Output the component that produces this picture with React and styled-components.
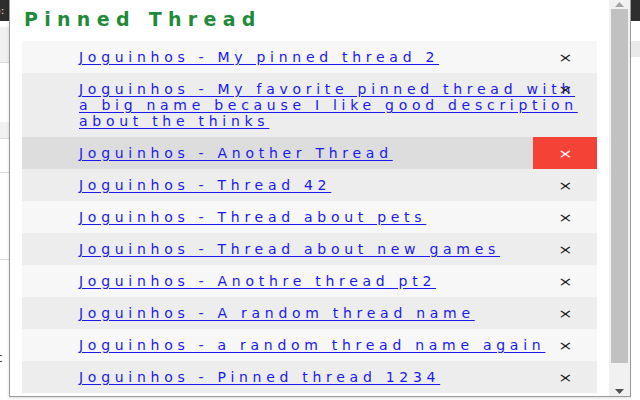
import React from 'react';
import styled, { createGlobalStyle } from 'styled-components';

const Global = createGlobalStyle`
  html, body { margin: 0; padding: 0; background: #fff; overflow: hidden; }
  body { width: 640px; height: 400px; font-family: "DejaVu Sans", Verdana, sans-serif; }
`;

const Screen = styled.div`
  display: flex;
  width: 640px;
  height: 400px;
  overflow: hidden;
`;

/* page behind the popup, only a sliver is visible on each side */
const Backdrop = styled.div`
  width: 9px;
  flex-shrink: 0;
  display: flex;
  flex-direction: column;
  background: #fff;
`;

const BackBar = styled.div`
  height: 21px;
  background: #2e2e2e;
  color: #ddd;
  font: 11px "DejaVu Sans", sans-serif;
  line-height: 21px;
  white-space: nowrap;
  overflow: hidden;
  text-indent: ${({ $indent }) => $indent || 0}px;
`;

const BackBand = styled.div`
  height: ${({ $h }) => $h}px;
  background: ${({ $bg }) => $bg || '#fff'};
  border-bottom: ${({ $line }) => ($line ? '1px solid #dcdcdc' : 'none')};
`;

const BackText = styled.div`
  height: 20px;
  font: 12px "DejaVu Sans", sans-serif;
  color: #333;
  line-height: 20px;
  text-indent: -4px;
  overflow: hidden;
`;

const Popup = styled.div`
  width: 620px;
  height: 396px;
  flex-shrink: 0;
  display: flex;
  background: #fff;
  border-left: 1px solid #9a9a9a;
  border-right: 1px solid #9a9a9a;
  border-bottom: 1px solid #9a9a9a;
  box-shadow: 0 1px 3px rgba(0, 0, 0, 0.15);
`;

const Content = styled.div`
  flex: 1;
  padding: 7px 12px 0 12px;
  overflow: hidden;
`;

const Title = styled.h1`
  margin: 0 0 10px 2px;
  font-family: "DejaVu Sans", Verdana, sans-serif;
  font-size: 19px;
  line-height: 24px;
  font-weight: 700;
  letter-spacing: 6.3px;
  color: #1f8b3a;
`;

const List = styled.ul`
  list-style: none;
  margin: 0;
  padding: 0;
`;

const Row = styled.li`
  position: relative;
  padding: 8px 8px 8px 57px;
  font-size: 14px;
  line-height: 16px;
  background: ${({ $hover, $odd }) => ($hover ? '#dddddd' : $odd ? '#f7f7f7' : '#ededed')};
`;

const Link = styled.a`
  font-family: "DejaVu Sans", Verdana, sans-serif;
  font-size: 14px;
  line-height: 16px;
  letter-spacing: 4.72px;
  color: #1a1aee;
  text-decoration: underline;
  text-underline-offset: 2px;
`;

const Remove = styled.span`
  position: absolute;
  top: 0;
  right: 0;
  width: 64px;
  height: 32px;
  display: flex;
  align-items: center;
  justify-content: center;
  background: ${({ $hover }) => ($hover ? '#f44336' : 'transparent')};
  color: ${({ $hover }) => ($hover ? '#fff' : '#222')};
`;

const Cross = styled.span`
  display: inline-block;
  font-family: "DejaVu Sans", sans-serif;
  font-size: 13px;
  line-height: 13px;
  transform: scaleX(1.35);
`;

const Scrollbar = styled.div`
  width: 21px;
  flex-shrink: 0;
  display: flex;
  flex-direction: column;
  align-items: center;
  background: #f1f1f1;
`;

const Arrow = styled.div`
  height: 9px;
  display: flex;
  align-items: center;
  justify-content: center;
  color: ${({ $dim }) => ($dim ? '#a3a3a3' : '#505050')};
`;

const Thumb = styled.div`
  width: 17px;
  height: 354px;
  background: #c1c1c1;
`;

const Track = styled.div`
  flex: 1;
`;

const threads = [
  'Joguinhos - My pinned thread 2',
  'Joguinhos - My favorite pinned thread with a big name because I like good description about the thinks',
  'Joguinhos - Another Thread',
  'Joguinhos - Thread 42',
  'Joguinhos - Thread about pets',
  'Joguinhos - Thread about new games',
  'Joguinhos - Anothre thread pt2',
  'Joguinhos - A random thread name',
  'Joguinhos - a random thread name again',
  'Joguinhos - Pinned thread 1234',
];

function Triangle({ up }) {
  return (
    <svg width="9" height="5" viewBox="0 0 9 5">
      <path d={up ? 'M0 5 L4.5 0 L9 5 Z' : 'M0 0 L4.5 5 L9 0 Z'} fill="currentColor" />
    </svg>
  );
}

export default function App() {
  return (
    <Screen>
      <Global />
      <Backdrop>
        <BackBar $indent={-6}>o:</BackBar>
        <BackBand $h={6} />
        <BackBand $h={35} $bg="#f0f0f0" $line />
        <BackBand $h={59} />
        <BackBand $h={16} $bg="#f2f2f2" $line />
        <BackBand $h={33} $line />
        <BackBand $h={86} $line />
        <BackBand $h={88} />
        <BackText>c</BackText>
      </Backdrop>

      <Popup>
        <Content>
          <Title>Pinned Thread</Title>
          <List>
            {threads.map((name, i) => (
              <Row key={name} $odd={i % 2 === 0} $hover={i === 2}>
                <Link href="#">{name}</Link>
                <Remove $hover={i === 2}><Cross>×</Cross></Remove>
              </Row>
            ))}
          </List>
        </Content>
        <Scrollbar>
          <Arrow $dim><Triangle up /></Arrow>
          <Thumb />
          <Track />
          <Arrow><Triangle /></Arrow>
        </Scrollbar>
      </Popup>

      <Backdrop>
        <BackBar />
        <BackBand $h={20} />
        <BackBand $h={16} $bg="#eaeaea" />
      </Backdrop>
    </Screen>
  );
}
